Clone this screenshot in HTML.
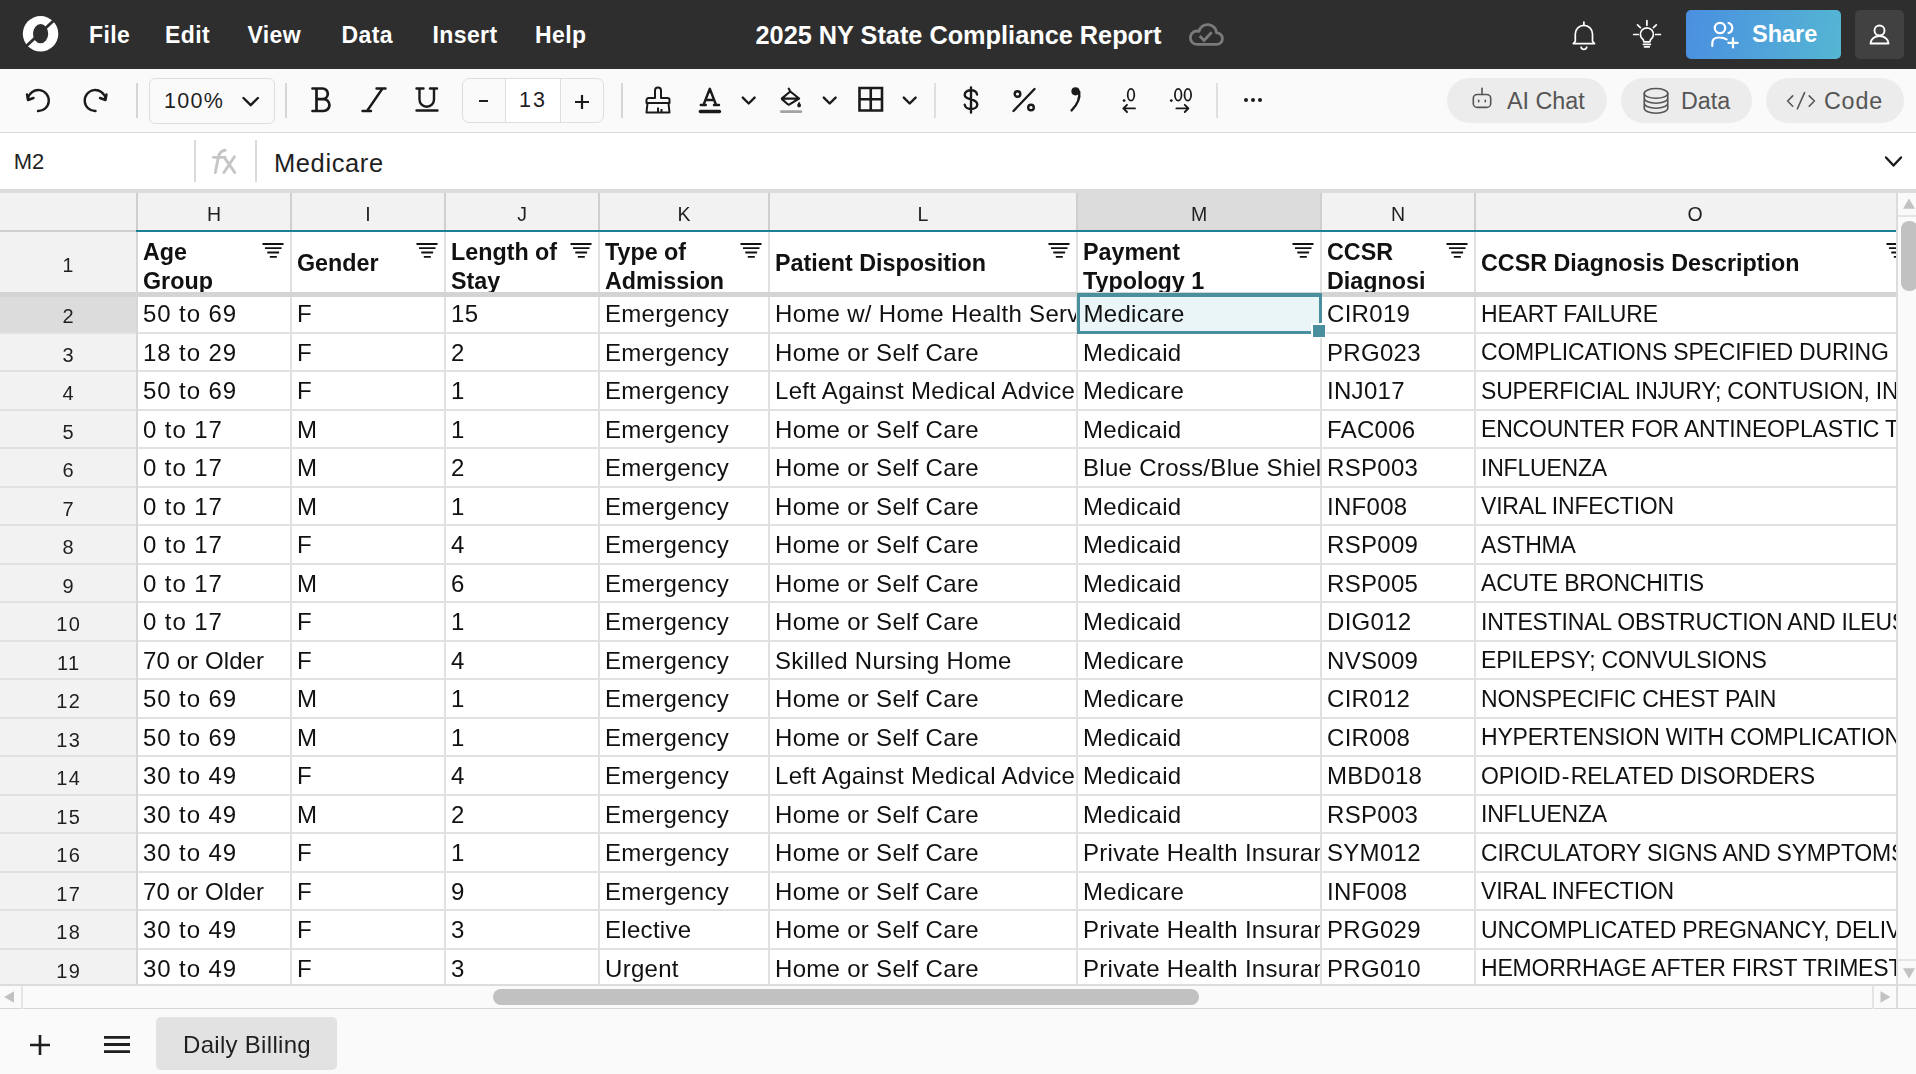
<!DOCTYPE html><html><head><meta charset="utf-8"><title>Spreadsheet</title><style>
*{margin:0;padding:0;box-sizing:border-box}
html,body{width:1916px;height:1074px;overflow:hidden;background:#fff;font-family:"Liberation Sans",sans-serif;color:#1f1f1f}
.a{position:absolute}
.t{position:absolute;white-space:nowrap;line-height:1}
svg{position:absolute;overflow:visible}
</style></head><body><div class="a" style="left:0;top:0;width:1916px;height:69px;background:#2e2e2e"></div><svg style="left:0;top:0" width="80" height="69" viewBox="0 0 80 69"><circle cx="40.55" cy="33.8" r="17.75" fill="#fff"/><ellipse cx="40.6" cy="33.7" rx="7.6" ry="9.6" fill="#2e2e2e"/><line x1="25.3" y1="47" x2="54.8" y2="19.5" stroke="#2e2e2e" stroke-width="2.9"/></svg><div class="t" style="left:89px;top:23.5px;font-size:23px;font-weight:700;letter-spacing:0.4px;color:#fff">File</div><div class="t" style="left:165px;top:23.5px;font-size:23px;font-weight:700;letter-spacing:0.4px;color:#fff">Edit</div><div class="t" style="left:247.5px;top:23.5px;font-size:23px;font-weight:700;letter-spacing:0.4px;color:#fff">View</div><div class="t" style="left:341.5px;top:23.5px;font-size:23px;font-weight:700;letter-spacing:0.4px;color:#fff">Data</div><div class="t" style="left:432.5px;top:23.5px;font-size:23px;font-weight:700;letter-spacing:0.4px;color:#fff">Insert</div><div class="t" style="left:535px;top:23.5px;font-size:23px;font-weight:700;letter-spacing:0.4px;color:#fff">Help</div><div class="t" style="left:755.5px;top:23px;font-size:25.3px;font-weight:700;color:#fff">2025 NY State Compliance Report</div><svg style="left:1180px;top:15px" width="55" height="37" viewBox="0 0 55 37"><path d="M17 29.4 H36.6 A5.8 5.8 0 0 0 36.66 17.79 A9 9 0 0 0 18.98 16.29 A6.7 6.7 0 1 0 17 29.4 Z" fill="none" stroke="#7a7a7a" stroke-width="2.8" stroke-linejoin="round"/><path d="M19.7 21 L24.1 25.5 L31.7 17.2" fill="none" stroke="#7a7a7a" stroke-width="2.8"/></svg><svg style="left:1571px;top:20px" width="26" height="31" viewBox="0 0 26 31"><path d="M2.3 23.6 L4.3 21.2 V13.9 A8.6 8.6 0 0 1 21.5 13.9 V21.2 L23.5 23.6 Z M12.9 2.1 V5.3 M10.1 27.2 A2.9 2.9 0 0 0 15.7 27.2" fill="none" stroke="#fff" stroke-width="1.7" stroke-linecap="round" stroke-linejoin="round"/></svg><svg style="left:1632px;top:19px" width="30" height="30" viewBox="0 0 30 30"><path d="M14.9 1.6 V6.2 M5.5 5.8 L8.4 8.7 M24.3 5.8 L21.4 8.7 M1.7 15.5 H6.2 M23.6 15.5 H28.4 M11.9 22.8 L11.3 20.7 A6.5 6.5 0 1 1 18.5 20.7 L17.9 22.8 Z M11.4 25.3 H18.4 M12.5 27.8 H17.3" fill="none" stroke="#fff" stroke-width="1.7" stroke-linecap="round" stroke-linejoin="round"/></svg><div class="a" style="left:1686px;top:10px;width:155px;height:49px;border-radius:5px;background:linear-gradient(100deg,#4a8fe0 0%,#55b6d3 100%)"></div><svg style="left:1709px;top:20px" width="32" height="30" viewBox="0 0 32 30"><circle cx="11" cy="8" r="5.2" fill="none" stroke="#fff" stroke-width="2.2"/><path d="M19.5 3 a5.2 5.2 0 0 1 0 10" fill="none" stroke="#fff" stroke-width="2.2" stroke-linecap="round"/><path d="M3.3 25.9 V23 Q3.3 17.5 10 17.5 Q15 17.5 17.6 19.3" fill="none" stroke="#fff" stroke-width="2.2" stroke-linecap="round"/><path d="M24 18.3 V27.5 M19.3 22.8 H28.7" fill="none" stroke="#fff" stroke-width="2.2" stroke-linecap="round"/></svg><div class="t" style="left:1752px;top:22.5px;font-size:23.5px;font-weight:700;color:#fff">Share</div><div class="a" style="left:1855px;top:10px;width:49px;height:49px;border-radius:5px;background:#414141"></div><svg style="left:1869px;top:24px" width="22" height="22" viewBox="0 0 22 22"><circle cx="10.5" cy="6.5" r="5" fill="none" stroke="#fff" stroke-width="1.9"/><path d="M1.5 19.5 a9 7.5 0 0 1 18 0 z" fill="none" stroke="#fff" stroke-width="1.9" stroke-linejoin="round"/></svg><div class="a" style="left:0;top:69px;width:1916px;height:63px;background:#fafafa"></div><div class="a" style="left:0;top:132px;width:1916px;height:1px;background:#dcdcdc"></div><svg style="left:24px;top:86px" width="30" height="28" viewBox="0 0 30 28"><path d="M14 25 a10.5 10.5 0 1 0 -10-12.5" fill="none" stroke="#1a1a1a" stroke-width="2.4" stroke-linecap="round" stroke-linejoin="round"/><path d="M3 8.5 l1 5.5 l5.5 -2" fill="none" stroke="#1a1a1a" stroke-width="2.4" stroke-linecap="round" stroke-linejoin="round"/></svg><svg style="left:80px;top:86px" width="30" height="28" viewBox="0 0 30 28"><path d="M15.5 25 a10.5 10.5 0 1 1 10-12.5" fill="none" stroke="#1a1a1a" stroke-width="2.4" stroke-linecap="round" stroke-linejoin="round"/><path d="M26.5 8.5 l-1 5.5 l-5.5 -2" fill="none" stroke="#1a1a1a" stroke-width="2.4" stroke-linecap="round" stroke-linejoin="round"/></svg><div class="a" style="left:136px;top:83px;width:2px;height:35px;background:#d6d6d6"></div><div class="a" style="left:149px;top:78px;width:126px;height:46px;border:1.5px solid #dedede;border-radius:6px;background:#fafafa"></div><div class="t" style="left:164px;top:90.5px;font-size:21.5px;letter-spacing:1.3px;color:#1f1f1f">100%</div><svg style="left:240px;top:94px" width="20" height="14" viewBox="0 0 20 14"><path d="M3.5 4 l7.2 7.2 l7.2 -7.2" fill="none" stroke="#1a1a1a" stroke-width="2.4" stroke-linecap="round" stroke-linejoin="round" stroke-width="2.7"/></svg><div class="a" style="left:285px;top:83px;width:2px;height:35px;background:#d6d6d6"></div><svg style="left:310px;top:86px" width="24" height="28" viewBox="0 0 24 28"><path d="M2.5 2.5 h10 a5.3 5.3 0 0 1 0 10.6 h-6 M6.5 2.5 v22.5 M6.5 13.1 h7 a5.9 5.9 0 0 1 0 11.9 h-11" fill="none" stroke="#1a1a1a" stroke-width="2.7" stroke-linecap="round" stroke-linejoin="round"/></svg><svg style="left:360px;top:86px" width="28" height="28" viewBox="0 0 28 28"><path d="M16.5 2.5 h9 M2.5 25 h8.5 M22.5 2.5 l-15.5 22.5" fill="none" stroke="#1a1a1a" stroke-width="2.4" stroke-linecap="round" stroke-linejoin="round"/></svg><svg style="left:414px;top:86px" width="26" height="28" viewBox="0 0 26 28"><path d="M2.5 2.5 h7 M16 2.5 h7 M5.5 2.5 v11 a7.25 7.25 0 0 0 14.5 0 v-11 M2.5 24.5 h21" fill="none" stroke="#1a1a1a" stroke-width="2.4" stroke-linecap="round" stroke-linejoin="round"/></svg><div class="a" style="left:462px;top:78px;width:142px;height:45px;border:1.5px solid #dedede;border-radius:7px;background:#fafafa;overflow:hidden"><div class="a" style="left:42px;top:0;width:56px;height:43px;background:#fff;border-left:1.5px solid #dedede;border-right:1.5px solid #dedede"></div></div><div class="a" style="left:479px;top:100px;width:9px;height:2.2px;background:#1f1f1f"></div><div class="t" style="left:519px;top:89.5px;font-size:21.5px;letter-spacing:2px;color:#1f1f1f">13</div><svg style="left:573px;top:93px" width="18" height="18" viewBox="0 0 18 18"><path d="M9 2 v14 M2 9 h14" fill="none" stroke="#1a1a1a" stroke-width="2.2"/></svg><div class="a" style="left:621px;top:83px;width:2px;height:35px;background:#d6d6d6"></div><svg style="left:644px;top:85px" width="28" height="30" viewBox="0 0 28 30"><path d="M11 13 V5.5 a3 3 0 0 1 6 0 V13 h6.5 a2 2 0 0 1 2 2 v3 H2.5 v-3 a2 2 0 0 1 2-2z M3.5 18 l-1 9.5 h23 l-1-9.5 M14 22.5 v5 M17.5 24 v3.5" fill="none" stroke="#1a1a1a" stroke-width="2" stroke-linejoin="round"/></svg><svg style="left:697px;top:86px" width="28" height="30" viewBox="0 0 28 30"><path d="M6.5 19 L12.8 2.8 L19.1 19 M8.6 14 H17 M3.8 19 H8.8 M17 19 H22" fill="none" stroke="#1a1a1a" stroke-width="2.4" stroke-linecap="round" stroke-linejoin="round" stroke-width="2.2"/><path d="M3.3 25.5 H22.5" stroke="#1a1a1a" stroke-width="3.3" stroke-linecap="round"/></svg><svg style="left:739px;top:94px" width="20" height="14" viewBox="0 0 20 14"><path d="M3.8 3.6 l5.9 5.9 l5.9 -5.9" fill="none" stroke="#1a1a1a" stroke-width="2.4" stroke-linecap="round" stroke-linejoin="round" stroke-width="2.6"/></svg><svg style="left:820px;top:94px" width="20" height="14" viewBox="0 0 20 14"><path d="M3.8 3.6 l5.9 5.9 l5.9 -5.9" fill="none" stroke="#1a1a1a" stroke-width="2.4" stroke-linecap="round" stroke-linejoin="round" stroke-width="2.6"/></svg><svg style="left:900px;top:94px" width="20" height="14" viewBox="0 0 20 14"><path d="M3.8 3.6 l5.9 5.9 l5.9 -5.9" fill="none" stroke="#1a1a1a" stroke-width="2.4" stroke-linecap="round" stroke-linejoin="round" stroke-width="2.6"/></svg><svg style="left:778px;top:86px" width="28" height="30" viewBox="0 0 28 30"><path d="M10.7 2.6 L12.3 5.5 L21.1 12.5 L11.6 18.3 Q10.6 18.9 9.8 18.2 L4.2 13.4 Q3.5 12.8 4.2 12.1 L12.3 5.5 M3.9 12.6 H21.1" fill="none" stroke="#1a1a1a" stroke-width="2.1" stroke-linejoin="round" stroke-linecap="round"/><path d="M21.1 15.4 L22.8 18.6 a1.9 1.9 0 1 1 -3.4 0z" fill="#1a1a1a"/><path d="M3.4 25.7 h19.5" stroke="#a3a3a3" stroke-width="2.8" stroke-linecap="round"/></svg><svg style="left:856px;top:85px" width="30" height="30" viewBox="0 0 30 30"><path d="M3.5 3 h22.5 v22.5 h-22.5z M14.75 3 v22.5 M3.5 14.25 h22.5" fill="none" stroke="#1a1a1a" stroke-width="2.6"/></svg><div class="a" style="left:934px;top:83px;width:2px;height:35px;background:#dfdfdf"></div><svg style="left:960px;top:85px" width="22" height="30" viewBox="0 0 22 30"><path d="M17 9.5 a5.5 4.6 0 0 0 -6-4.2 c-3.5 0-6.3 1.8-6.3 4.4 c0 6.3 12.6 3.2 12.6 9.7 c0 2.8-2.8 4.6-6.3 4.6 a6 4.8 0 0 1 -6.3-4.3 M11 2.5 v25" fill="none" stroke="#1a1a1a" stroke-width="2.4" stroke-linecap="round" stroke-linejoin="round" stroke-width="2.4"/></svg><svg style="left:1010px;top:86px" width="30" height="28" viewBox="0 0 30 28"><path d="M24.5 3 l-21 22" fill="none" stroke="#1a1a1a" stroke-width="2.4" stroke-linecap="round" stroke-linejoin="round"/><circle cx="7.5" cy="8" r="2.8" fill="none" stroke="#1a1a1a" stroke-width="2.4" stroke-linecap="round" stroke-linejoin="round" stroke-width="2.1"/><circle cx="21" cy="21.5" r="2.8" fill="none" stroke="#1a1a1a" stroke-width="2.4" stroke-linecap="round" stroke-linejoin="round" stroke-width="2.1"/></svg><svg style="left:1068px;top:85px" width="16" height="28" viewBox="0 0 16 28"><circle cx="7.5" cy="6.3" r="4.1" fill="#1a1a1a"/><path d="M11.2 6.8 C12.2 13.5 9.5 19.5 3.6 25.4" fill="none" stroke="#1a1a1a" stroke-width="2.4" stroke-linecap="round" stroke-linejoin="round" stroke-width="2.5"/></svg><svg style="left:1115px;top:82px" width="85" height="36" viewBox="0 0 85 36"><circle cx="9.1" cy="18.6" r="1.35" fill="#1a1a1a"/><circle cx="56.3" cy="18.6" r="1.35" fill="#1a1a1a"/><g fill="none" stroke="#1a1a1a" stroke-width="1.8"><ellipse cx="16" cy="12.75" rx="3.3" ry="5.9"/><ellipse cx="63.2" cy="12.75" rx="3.3" ry="5.9"/><ellipse cx="72.8" cy="12.75" rx="3.3" ry="5.9"/></g><path d="M20 26.4 H8.4 M12 22.8 L8.4 26.4 L12 30 M61.4 26.4 H73.4 M69.8 22.8 L73.4 26.4 L69.8 30" fill="none" stroke="#1a1a1a" stroke-width="1.9" stroke-linecap="round" stroke-linejoin="round"/></svg><div class="a" style="left:1216px;top:83px;width:2px;height:35px;background:#dfdfdf"></div><div class="a" style="left:1244px;top:98px;width:4px;height:4px;border-radius:50%;background:#1a1a1a"></div><div class="a" style="left:1251px;top:98px;width:4px;height:4px;border-radius:50%;background:#1a1a1a"></div><div class="a" style="left:1258px;top:98px;width:4px;height:4px;border-radius:50%;background:#1a1a1a"></div><div class="a" style="left:1447px;top:78px;width:160px;height:45px;border-radius:23px;background:#ececec"></div><div class="a" style="left:1621px;top:78px;width:131px;height:45px;border-radius:23px;background:#ececec"></div><div class="a" style="left:1766px;top:78px;width:138px;height:45px;border-radius:23px;background:#ececec"></div><svg style="left:1470px;top:86px" width="24" height="24" viewBox="0 0 24 24"><rect x="3.3" y="8.5" width="17.4" height="12.9" rx="4" fill="none" stroke="#555" stroke-width="1.6" stroke-linecap="round" stroke-linejoin="round"/><path d="M12 2.2 V8.5" fill="none" stroke="#555" stroke-width="1.6" stroke-linecap="round" stroke-linejoin="round"/><path d="M8.7 14.2 V15.8 M15.3 14.2 V15.8" fill="none" stroke="#555" stroke-width="1.6" stroke-linecap="round" stroke-linejoin="round" stroke-width="2"/></svg><div class="t" style="left:1507px;top:90px;font-size:23.3px;color:#555">AI Chat</div><svg style="left:1642px;top:86px" width="28" height="30" viewBox="0 0 28 30"><ellipse cx="14" cy="7.4" rx="11.75" ry="4.9" fill="none" stroke="#555" stroke-width="1.6" stroke-linecap="round" stroke-linejoin="round" stroke-width="1.5"/><path d="M2.25 7.4 V22.3 A11.75 4.9 0 0 0 25.75 22.3 V7.4 M2.25 12.37 A11.75 4.9 0 0 0 25.75 12.37 M2.25 17.33 A11.75 4.9 0 0 0 25.75 17.33" fill="none" stroke="#555" stroke-width="1.6" stroke-linecap="round" stroke-linejoin="round" stroke-width="1.5"/></svg><div class="t" style="left:1681px;top:90px;font-size:23.3px;color:#555">Data</div><svg style="left:1786px;top:89px" width="32" height="24" viewBox="0 0 32 24"><path d="M6.7 6.9 L1.6 12.05 L6.7 17.2 M18.6 3.6 L11.4 19.8 M23.2 6.9 L28.4 12.05 L23.2 17.2" fill="none" stroke="#555" stroke-width="1.6" stroke-linecap="round" stroke-linejoin="round" stroke-width="2.2"/></svg><div class="t" style="left:1824px;top:90px;font-size:23.3px;letter-spacing:0.8px;color:#555">Code</div><div class="a" style="left:0;top:133px;width:1916px;height:56px;background:#fff"></div><div class="t" style="left:13.8px;top:151px;font-size:22px;color:#1f1f1f">M2</div><div class="a" style="left:194px;top:140px;width:2px;height:42px;background:#dadada"></div><svg style="left:195px;top:140px" width="60" height="45" viewBox="0 0 60 45"><path d="M20.3 32.5 L23.3 17.6 Q24.7 10.6 30.2 10.3 M18.4 17.4 H30.2 M29.3 17.4 L39.8 32.5 M39.4 16.8 L28.9 32.5" fill="none" stroke="#c6c6c6" stroke-width="2.9" stroke-linecap="round"/></svg><div class="a" style="left:255px;top:140px;width:2px;height:42px;background:#dadada"></div><div class="t" style="left:274px;top:150.5px;font-size:25.5px;letter-spacing:0.6px;color:#1f1f1f">Medicare</div><svg style="left:1882px;top:152px" width="22" height="16" viewBox="0 0 22 16"><path d="M4 5.5 l7.5 8 l7.5 -8" fill="none" stroke="#1a1a1a" stroke-width="2.4" stroke-linecap="round" stroke-linejoin="round"/></svg><div class="a" style="left:0;top:0;width:1916px;height:1074px;will-change:transform"><div class="a" style="left:0;top:189px;width:1916px;height:4px;background:#dcdcdc"></div><div class="a" style="left:0;top:193px;width:1916px;height:37px;background:#f2f2f2"></div><div class="a" style="left:1077px;top:193px;width:244px;height:37px;background:#dcdcdc"></div><div class="t" style="left:137px;top:205px;width:154px;text-align:center;font-size:19.5px;color:#1f1f1f">H</div><div class="t" style="left:291px;top:205px;width:154px;text-align:center;font-size:19.5px;color:#1f1f1f">I</div><div class="t" style="left:445px;top:205px;width:154px;text-align:center;font-size:19.5px;color:#1f1f1f">J</div><div class="t" style="left:599px;top:205px;width:170px;text-align:center;font-size:19.5px;color:#1f1f1f">K</div><div class="t" style="left:769px;top:205px;width:308px;text-align:center;font-size:19.5px;color:#1f1f1f">L</div><div class="t" style="left:1077px;top:205px;width:244px;text-align:center;font-size:19.5px;color:#1f1f1f">M</div><div class="t" style="left:1321px;top:205px;width:154px;text-align:center;font-size:19.5px;color:#1f1f1f">N</div><div class="t" style="left:1475px;top:205px;width:440px;text-align:center;font-size:19.5px;color:#1f1f1f">O</div><div class="a" style="left:0;top:230px;width:137px;height:2px;background:#cfcfcf"></div><div class="a" style="left:136px;top:230px;width:1760px;height:2px;background:#1f8095"></div><div class="a" style="left:0;top:232px;width:137px;height:60px;background:#f2f2f2"></div><div class="t" style="left:0;top:256px;width:136px;text-align:center;font-size:19.5px;color:#1f1f1f">1</div><div class="a" style="left:138px;top:232px;width:152px;height:60px;overflow:hidden"><div class="t" style="left:5px;top:9px;font-size:23.3px;font-weight:700;color:#111">Age</div><div class="t" style="left:5px;top:38px;font-size:23.3px;font-weight:700;color:#111">Group</div></div><svg style="left:261px;top:242px" width="24" height="18" viewBox="0 0 24 18"><path d="M1.5 2 h21 M4 6.2 h16.5 M6.3 10.5 h11.8 M8.8 14.8 h7" stroke="#111" stroke-width="1.8" fill="none"/></svg><div class="a" style="left:292px;top:232px;width:152px;height:60px;overflow:hidden"><div class="t" style="left:5px;top:20px;font-size:23.3px;font-weight:700;color:#111">Gender</div></div><svg style="left:415px;top:242px" width="24" height="18" viewBox="0 0 24 18"><path d="M1.5 2 h21 M4 6.2 h16.5 M6.3 10.5 h11.8 M8.8 14.8 h7" stroke="#111" stroke-width="1.8" fill="none"/></svg><div class="a" style="left:446px;top:232px;width:152px;height:60px;overflow:hidden"><div class="t" style="left:5px;top:9px;font-size:23.3px;font-weight:700;color:#111">Length of</div><div class="t" style="left:5px;top:38px;font-size:23.3px;font-weight:700;color:#111">Stay</div></div><svg style="left:569px;top:242px" width="24" height="18" viewBox="0 0 24 18"><path d="M1.5 2 h21 M4 6.2 h16.5 M6.3 10.5 h11.8 M8.8 14.8 h7" stroke="#111" stroke-width="1.8" fill="none"/></svg><div class="a" style="left:600px;top:232px;width:168px;height:60px;overflow:hidden"><div class="t" style="left:5px;top:9px;font-size:23.3px;font-weight:700;color:#111">Type of</div><div class="t" style="left:5px;top:38px;font-size:23.3px;font-weight:700;color:#111">Admission</div></div><svg style="left:739px;top:242px" width="24" height="18" viewBox="0 0 24 18"><path d="M1.5 2 h21 M4 6.2 h16.5 M6.3 10.5 h11.8 M8.8 14.8 h7" stroke="#111" stroke-width="1.8" fill="none"/></svg><div class="a" style="left:770px;top:232px;width:306px;height:60px;overflow:hidden"><div class="t" style="left:5px;top:20px;font-size:23.3px;font-weight:700;color:#111">Patient Disposition</div></div><svg style="left:1047px;top:242px" width="24" height="18" viewBox="0 0 24 18"><path d="M1.5 2 h21 M4 6.2 h16.5 M6.3 10.5 h11.8 M8.8 14.8 h7" stroke="#111" stroke-width="1.8" fill="none"/></svg><div class="a" style="left:1078px;top:232px;width:242px;height:60px;overflow:hidden"><div class="t" style="left:5px;top:9px;font-size:23.3px;font-weight:700;color:#111">Payment</div><div class="t" style="left:5px;top:38px;font-size:23.3px;font-weight:700;color:#111">Typology 1</div></div><svg style="left:1291px;top:242px" width="24" height="18" viewBox="0 0 24 18"><path d="M1.5 2 h21 M4 6.2 h16.5 M6.3 10.5 h11.8 M8.8 14.8 h7" stroke="#111" stroke-width="1.8" fill="none"/></svg><div class="a" style="left:1322px;top:232px;width:152px;height:60px;overflow:hidden"><div class="t" style="left:5px;top:9px;font-size:23.3px;font-weight:700;color:#111">CCSR</div><div class="t" style="left:5px;top:38px;font-size:23.3px;font-weight:700;color:#111">Diagnosi</div></div><svg style="left:1445px;top:242px" width="24" height="18" viewBox="0 0 24 18"><path d="M1.5 2 h21 M4 6.2 h16.5 M6.3 10.5 h11.8 M8.8 14.8 h7" stroke="#111" stroke-width="1.8" fill="none"/></svg><div class="a" style="left:1476px;top:232px;width:438px;height:60px;overflow:hidden"><div class="t" style="left:5px;top:20px;font-size:23.3px;font-weight:700;color:#111">CCSR Diagnosis Description</div></div><svg style="left:1885px;top:242px" width="24" height="18" viewBox="0 0 24 18"><path d="M1.5 2 h21 M4 6.2 h16.5 M6.3 10.5 h11.8 M8.8 14.8 h7" stroke="#111" stroke-width="1.8" fill="none"/></svg><div class="a" style="left:0;top:292px;width:1896px;height:5px;background:#d4d4d4"></div><div class="a" style="left:0;top:297px;width:137px;height:688px;background:#f2f2f2"></div><div class="a" style="left:0;top:297px;width:137px;height:36px;background:#dcdcdc"></div><div class="t" style="left:0.7px;top:306.00px;width:136px;text-align:center;font-size:20px;letter-spacing:1.4px;color:#1f1f1f">2</div><div class="a" style="left:138px;top:297px;width:152px;height:35px;overflow:hidden"><div class="t" style="left:5px;top:5.10px;font-size:24px;letter-spacing:0.9px;color:#111">50 to 69</div></div><div class="a" style="left:292px;top:297px;width:152px;height:35px;overflow:hidden"><div class="t" style="left:5px;top:5.10px;font-size:24px;letter-spacing:0.3px;color:#111">F</div></div><div class="a" style="left:446px;top:297px;width:152px;height:35px;overflow:hidden"><div class="t" style="left:5px;top:5.10px;font-size:24px;letter-spacing:0.3px;color:#111">15</div></div><div class="a" style="left:600px;top:297px;width:168px;height:35px;overflow:hidden"><div class="t" style="left:5px;top:5.10px;font-size:24px;letter-spacing:0.3px;color:#111">Emergency</div></div><div class="a" style="left:770px;top:297px;width:306px;height:35px;overflow:hidden"><div class="t" style="left:5px;top:5.10px;font-size:24px;letter-spacing:0.3px;color:#111">Home w/ Home Health Services</div></div><div class="a" style="left:1078px;top:297px;width:242px;height:35px;overflow:hidden"><div class="t" style="left:5px;top:5.10px;font-size:24px;letter-spacing:0.3px;color:#111">Medicare</div></div><div class="a" style="left:1322px;top:297px;width:152px;height:35px;overflow:hidden"><div class="t" style="left:5px;top:5.10px;font-size:24px;letter-spacing:0.3px;color:#111">CIR019</div></div><div class="a" style="left:1476px;top:297px;width:438px;height:35px;overflow:hidden"><div class="t" style="left:5px;top:5.90px;font-size:23px;letter-spacing:-0.2px;color:#111">HEART FAILURE</div></div><div class="a" style="left:0;top:332px;width:1896px;height:2px;background:#e1e1e1"></div><div class="t" style="left:0.7px;top:344.50px;width:136px;text-align:center;font-size:20px;letter-spacing:1.4px;color:#1f1f1f">3</div><div class="a" style="left:138px;top:334px;width:152px;height:36px;overflow:hidden"><div class="t" style="left:5px;top:6.60px;font-size:24px;letter-spacing:0.9px;color:#111">18 to 29</div></div><div class="a" style="left:292px;top:334px;width:152px;height:36px;overflow:hidden"><div class="t" style="left:5px;top:6.60px;font-size:24px;letter-spacing:0.3px;color:#111">F</div></div><div class="a" style="left:446px;top:334px;width:152px;height:36px;overflow:hidden"><div class="t" style="left:5px;top:6.60px;font-size:24px;letter-spacing:0.3px;color:#111">2</div></div><div class="a" style="left:600px;top:334px;width:168px;height:36px;overflow:hidden"><div class="t" style="left:5px;top:6.60px;font-size:24px;letter-spacing:0.3px;color:#111">Emergency</div></div><div class="a" style="left:770px;top:334px;width:306px;height:36px;overflow:hidden"><div class="t" style="left:5px;top:6.60px;font-size:24px;letter-spacing:0.3px;color:#111">Home or Self Care</div></div><div class="a" style="left:1078px;top:334px;width:242px;height:36px;overflow:hidden"><div class="t" style="left:5px;top:6.60px;font-size:24px;letter-spacing:0.3px;color:#111">Medicaid</div></div><div class="a" style="left:1322px;top:334px;width:152px;height:36px;overflow:hidden"><div class="t" style="left:5px;top:6.60px;font-size:24px;letter-spacing:0.3px;color:#111">PRG023</div></div><div class="a" style="left:1476px;top:334px;width:438px;height:36px;overflow:hidden"><div class="t" style="left:5px;top:7.40px;font-size:23px;letter-spacing:-0.2px;color:#111">COMPLICATIONS SPECIFIED DURING CHILDBIRTH</div></div><div class="a" style="left:0;top:370px;width:1896px;height:2px;background:#e1e1e1"></div><div class="t" style="left:0.7px;top:383.00px;width:136px;text-align:center;font-size:20px;letter-spacing:1.4px;color:#1f1f1f">4</div><div class="a" style="left:138px;top:372px;width:152px;height:37px;overflow:hidden"><div class="t" style="left:5px;top:7.10px;font-size:24px;letter-spacing:0.9px;color:#111">50 to 69</div></div><div class="a" style="left:292px;top:372px;width:152px;height:37px;overflow:hidden"><div class="t" style="left:5px;top:7.10px;font-size:24px;letter-spacing:0.3px;color:#111">F</div></div><div class="a" style="left:446px;top:372px;width:152px;height:37px;overflow:hidden"><div class="t" style="left:5px;top:7.10px;font-size:24px;letter-spacing:0.3px;color:#111">1</div></div><div class="a" style="left:600px;top:372px;width:168px;height:37px;overflow:hidden"><div class="t" style="left:5px;top:7.10px;font-size:24px;letter-spacing:0.3px;color:#111">Emergency</div></div><div class="a" style="left:770px;top:372px;width:306px;height:37px;overflow:hidden"><div class="t" style="left:5px;top:7.10px;font-size:24px;letter-spacing:0.3px;color:#111">Left Against Medical Advice</div></div><div class="a" style="left:1078px;top:372px;width:242px;height:37px;overflow:hidden"><div class="t" style="left:5px;top:7.10px;font-size:24px;letter-spacing:0.3px;color:#111">Medicare</div></div><div class="a" style="left:1322px;top:372px;width:152px;height:37px;overflow:hidden"><div class="t" style="left:5px;top:7.10px;font-size:24px;letter-spacing:0.3px;color:#111">INJ017</div></div><div class="a" style="left:1476px;top:372px;width:438px;height:37px;overflow:hidden"><div class="t" style="left:5px;top:7.90px;font-size:23px;letter-spacing:-0.2px;color:#111">SUPERFICIAL INJURY; CONTUSION, INITIAL ENCOUNTER</div></div><div class="a" style="left:0;top:409px;width:1896px;height:2px;background:#e1e1e1"></div><div class="t" style="left:0.7px;top:421.50px;width:136px;text-align:center;font-size:20px;letter-spacing:1.4px;color:#1f1f1f">5</div><div class="a" style="left:138px;top:411px;width:152px;height:36px;overflow:hidden"><div class="t" style="left:5px;top:6.60px;font-size:24px;letter-spacing:0.9px;color:#111">0 to 17</div></div><div class="a" style="left:292px;top:411px;width:152px;height:36px;overflow:hidden"><div class="t" style="left:5px;top:6.60px;font-size:24px;letter-spacing:0.3px;color:#111">M</div></div><div class="a" style="left:446px;top:411px;width:152px;height:36px;overflow:hidden"><div class="t" style="left:5px;top:6.60px;font-size:24px;letter-spacing:0.3px;color:#111">1</div></div><div class="a" style="left:600px;top:411px;width:168px;height:36px;overflow:hidden"><div class="t" style="left:5px;top:6.60px;font-size:24px;letter-spacing:0.3px;color:#111">Emergency</div></div><div class="a" style="left:770px;top:411px;width:306px;height:36px;overflow:hidden"><div class="t" style="left:5px;top:6.60px;font-size:24px;letter-spacing:0.3px;color:#111">Home or Self Care</div></div><div class="a" style="left:1078px;top:411px;width:242px;height:36px;overflow:hidden"><div class="t" style="left:5px;top:6.60px;font-size:24px;letter-spacing:0.3px;color:#111">Medicaid</div></div><div class="a" style="left:1322px;top:411px;width:152px;height:36px;overflow:hidden"><div class="t" style="left:5px;top:6.60px;font-size:24px;letter-spacing:0.3px;color:#111">FAC006</div></div><div class="a" style="left:1476px;top:411px;width:438px;height:36px;overflow:hidden"><div class="t" style="left:5px;top:7.40px;font-size:23px;letter-spacing:-0.2px;color:#111">ENCOUNTER FOR ANTINEOPLASTIC THERAPIES</div></div><div class="a" style="left:0;top:447px;width:1896px;height:2px;background:#e1e1e1"></div><div class="t" style="left:0.7px;top:460.00px;width:136px;text-align:center;font-size:20px;letter-spacing:1.4px;color:#1f1f1f">6</div><div class="a" style="left:138px;top:449px;width:152px;height:37px;overflow:hidden"><div class="t" style="left:5px;top:7.10px;font-size:24px;letter-spacing:0.9px;color:#111">0 to 17</div></div><div class="a" style="left:292px;top:449px;width:152px;height:37px;overflow:hidden"><div class="t" style="left:5px;top:7.10px;font-size:24px;letter-spacing:0.3px;color:#111">M</div></div><div class="a" style="left:446px;top:449px;width:152px;height:37px;overflow:hidden"><div class="t" style="left:5px;top:7.10px;font-size:24px;letter-spacing:0.3px;color:#111">2</div></div><div class="a" style="left:600px;top:449px;width:168px;height:37px;overflow:hidden"><div class="t" style="left:5px;top:7.10px;font-size:24px;letter-spacing:0.3px;color:#111">Emergency</div></div><div class="a" style="left:770px;top:449px;width:306px;height:37px;overflow:hidden"><div class="t" style="left:5px;top:7.10px;font-size:24px;letter-spacing:0.3px;color:#111">Home or Self Care</div></div><div class="a" style="left:1078px;top:449px;width:242px;height:37px;overflow:hidden"><div class="t" style="left:5px;top:7.10px;font-size:24px;letter-spacing:0.3px;color:#111">Blue Cross/Blue Shield</div></div><div class="a" style="left:1322px;top:449px;width:152px;height:37px;overflow:hidden"><div class="t" style="left:5px;top:7.10px;font-size:24px;letter-spacing:0.3px;color:#111">RSP003</div></div><div class="a" style="left:1476px;top:449px;width:438px;height:37px;overflow:hidden"><div class="t" style="left:5px;top:7.90px;font-size:23px;letter-spacing:-0.2px;color:#111">INFLUENZA</div></div><div class="a" style="left:0;top:486px;width:1896px;height:2px;background:#e1e1e1"></div><div class="t" style="left:0.7px;top:498.50px;width:136px;text-align:center;font-size:20px;letter-spacing:1.4px;color:#1f1f1f">7</div><div class="a" style="left:138px;top:488px;width:152px;height:36px;overflow:hidden"><div class="t" style="left:5px;top:6.60px;font-size:24px;letter-spacing:0.9px;color:#111">0 to 17</div></div><div class="a" style="left:292px;top:488px;width:152px;height:36px;overflow:hidden"><div class="t" style="left:5px;top:6.60px;font-size:24px;letter-spacing:0.3px;color:#111">M</div></div><div class="a" style="left:446px;top:488px;width:152px;height:36px;overflow:hidden"><div class="t" style="left:5px;top:6.60px;font-size:24px;letter-spacing:0.3px;color:#111">1</div></div><div class="a" style="left:600px;top:488px;width:168px;height:36px;overflow:hidden"><div class="t" style="left:5px;top:6.60px;font-size:24px;letter-spacing:0.3px;color:#111">Emergency</div></div><div class="a" style="left:770px;top:488px;width:306px;height:36px;overflow:hidden"><div class="t" style="left:5px;top:6.60px;font-size:24px;letter-spacing:0.3px;color:#111">Home or Self Care</div></div><div class="a" style="left:1078px;top:488px;width:242px;height:36px;overflow:hidden"><div class="t" style="left:5px;top:6.60px;font-size:24px;letter-spacing:0.3px;color:#111">Medicaid</div></div><div class="a" style="left:1322px;top:488px;width:152px;height:36px;overflow:hidden"><div class="t" style="left:5px;top:6.60px;font-size:24px;letter-spacing:0.3px;color:#111">INF008</div></div><div class="a" style="left:1476px;top:488px;width:438px;height:36px;overflow:hidden"><div class="t" style="left:5px;top:7.40px;font-size:23px;letter-spacing:-0.2px;color:#111">VIRAL INFECTION</div></div><div class="a" style="left:0;top:524px;width:1896px;height:2px;background:#e1e1e1"></div><div class="t" style="left:0.7px;top:537.00px;width:136px;text-align:center;font-size:20px;letter-spacing:1.4px;color:#1f1f1f">8</div><div class="a" style="left:138px;top:526px;width:152px;height:37px;overflow:hidden"><div class="t" style="left:5px;top:7.10px;font-size:24px;letter-spacing:0.9px;color:#111">0 to 17</div></div><div class="a" style="left:292px;top:526px;width:152px;height:37px;overflow:hidden"><div class="t" style="left:5px;top:7.10px;font-size:24px;letter-spacing:0.3px;color:#111">F</div></div><div class="a" style="left:446px;top:526px;width:152px;height:37px;overflow:hidden"><div class="t" style="left:5px;top:7.10px;font-size:24px;letter-spacing:0.3px;color:#111">4</div></div><div class="a" style="left:600px;top:526px;width:168px;height:37px;overflow:hidden"><div class="t" style="left:5px;top:7.10px;font-size:24px;letter-spacing:0.3px;color:#111">Emergency</div></div><div class="a" style="left:770px;top:526px;width:306px;height:37px;overflow:hidden"><div class="t" style="left:5px;top:7.10px;font-size:24px;letter-spacing:0.3px;color:#111">Home or Self Care</div></div><div class="a" style="left:1078px;top:526px;width:242px;height:37px;overflow:hidden"><div class="t" style="left:5px;top:7.10px;font-size:24px;letter-spacing:0.3px;color:#111">Medicaid</div></div><div class="a" style="left:1322px;top:526px;width:152px;height:37px;overflow:hidden"><div class="t" style="left:5px;top:7.10px;font-size:24px;letter-spacing:0.3px;color:#111">RSP009</div></div><div class="a" style="left:1476px;top:526px;width:438px;height:37px;overflow:hidden"><div class="t" style="left:5px;top:7.90px;font-size:23px;letter-spacing:-0.2px;color:#111">ASTHMA</div></div><div class="a" style="left:0;top:563px;width:1896px;height:2px;background:#e1e1e1"></div><div class="t" style="left:0.7px;top:575.50px;width:136px;text-align:center;font-size:20px;letter-spacing:1.4px;color:#1f1f1f">9</div><div class="a" style="left:138px;top:565px;width:152px;height:36px;overflow:hidden"><div class="t" style="left:5px;top:6.60px;font-size:24px;letter-spacing:0.9px;color:#111">0 to 17</div></div><div class="a" style="left:292px;top:565px;width:152px;height:36px;overflow:hidden"><div class="t" style="left:5px;top:6.60px;font-size:24px;letter-spacing:0.3px;color:#111">M</div></div><div class="a" style="left:446px;top:565px;width:152px;height:36px;overflow:hidden"><div class="t" style="left:5px;top:6.60px;font-size:24px;letter-spacing:0.3px;color:#111">6</div></div><div class="a" style="left:600px;top:565px;width:168px;height:36px;overflow:hidden"><div class="t" style="left:5px;top:6.60px;font-size:24px;letter-spacing:0.3px;color:#111">Emergency</div></div><div class="a" style="left:770px;top:565px;width:306px;height:36px;overflow:hidden"><div class="t" style="left:5px;top:6.60px;font-size:24px;letter-spacing:0.3px;color:#111">Home or Self Care</div></div><div class="a" style="left:1078px;top:565px;width:242px;height:36px;overflow:hidden"><div class="t" style="left:5px;top:6.60px;font-size:24px;letter-spacing:0.3px;color:#111">Medicaid</div></div><div class="a" style="left:1322px;top:565px;width:152px;height:36px;overflow:hidden"><div class="t" style="left:5px;top:6.60px;font-size:24px;letter-spacing:0.3px;color:#111">RSP005</div></div><div class="a" style="left:1476px;top:565px;width:438px;height:36px;overflow:hidden"><div class="t" style="left:5px;top:7.40px;font-size:23px;letter-spacing:-0.2px;color:#111">ACUTE BRONCHITIS</div></div><div class="a" style="left:0;top:601px;width:1896px;height:2px;background:#e1e1e1"></div><div class="t" style="left:0.7px;top:614.00px;width:136px;text-align:center;font-size:20px;letter-spacing:1.4px;color:#1f1f1f">10</div><div class="a" style="left:138px;top:603px;width:152px;height:37px;overflow:hidden"><div class="t" style="left:5px;top:7.10px;font-size:24px;letter-spacing:0.9px;color:#111">0 to 17</div></div><div class="a" style="left:292px;top:603px;width:152px;height:37px;overflow:hidden"><div class="t" style="left:5px;top:7.10px;font-size:24px;letter-spacing:0.3px;color:#111">F</div></div><div class="a" style="left:446px;top:603px;width:152px;height:37px;overflow:hidden"><div class="t" style="left:5px;top:7.10px;font-size:24px;letter-spacing:0.3px;color:#111">1</div></div><div class="a" style="left:600px;top:603px;width:168px;height:37px;overflow:hidden"><div class="t" style="left:5px;top:7.10px;font-size:24px;letter-spacing:0.3px;color:#111">Emergency</div></div><div class="a" style="left:770px;top:603px;width:306px;height:37px;overflow:hidden"><div class="t" style="left:5px;top:7.10px;font-size:24px;letter-spacing:0.3px;color:#111">Home or Self Care</div></div><div class="a" style="left:1078px;top:603px;width:242px;height:37px;overflow:hidden"><div class="t" style="left:5px;top:7.10px;font-size:24px;letter-spacing:0.3px;color:#111">Medicaid</div></div><div class="a" style="left:1322px;top:603px;width:152px;height:37px;overflow:hidden"><div class="t" style="left:5px;top:7.10px;font-size:24px;letter-spacing:0.3px;color:#111">DIG012</div></div><div class="a" style="left:1476px;top:603px;width:438px;height:37px;overflow:hidden"><div class="t" style="left:5px;top:7.90px;font-size:23px;letter-spacing:-0.2px;color:#111">INTESTINAL OBSTRUCTION AND ILEUS</div></div><div class="a" style="left:0;top:640px;width:1896px;height:2px;background:#e1e1e1"></div><div class="t" style="left:0.7px;top:652.50px;width:136px;text-align:center;font-size:20px;letter-spacing:1.4px;color:#1f1f1f">11</div><div class="a" style="left:138px;top:642px;width:152px;height:36px;overflow:hidden"><div class="t" style="left:5px;top:6.60px;font-size:24px;letter-spacing:0.1px;color:#111">70 or Older</div></div><div class="a" style="left:292px;top:642px;width:152px;height:36px;overflow:hidden"><div class="t" style="left:5px;top:6.60px;font-size:24px;letter-spacing:0.3px;color:#111">F</div></div><div class="a" style="left:446px;top:642px;width:152px;height:36px;overflow:hidden"><div class="t" style="left:5px;top:6.60px;font-size:24px;letter-spacing:0.3px;color:#111">4</div></div><div class="a" style="left:600px;top:642px;width:168px;height:36px;overflow:hidden"><div class="t" style="left:5px;top:6.60px;font-size:24px;letter-spacing:0.3px;color:#111">Emergency</div></div><div class="a" style="left:770px;top:642px;width:306px;height:36px;overflow:hidden"><div class="t" style="left:5px;top:6.60px;font-size:24px;letter-spacing:0.3px;color:#111">Skilled Nursing Home</div></div><div class="a" style="left:1078px;top:642px;width:242px;height:36px;overflow:hidden"><div class="t" style="left:5px;top:6.60px;font-size:24px;letter-spacing:0.3px;color:#111">Medicare</div></div><div class="a" style="left:1322px;top:642px;width:152px;height:36px;overflow:hidden"><div class="t" style="left:5px;top:6.60px;font-size:24px;letter-spacing:0.3px;color:#111">NVS009</div></div><div class="a" style="left:1476px;top:642px;width:438px;height:36px;overflow:hidden"><div class="t" style="left:5px;top:7.40px;font-size:23px;letter-spacing:-0.2px;color:#111">EPILEPSY; CONVULSIONS</div></div><div class="a" style="left:0;top:678px;width:1896px;height:2px;background:#e1e1e1"></div><div class="t" style="left:0.7px;top:691.00px;width:136px;text-align:center;font-size:20px;letter-spacing:1.4px;color:#1f1f1f">12</div><div class="a" style="left:138px;top:680px;width:152px;height:37px;overflow:hidden"><div class="t" style="left:5px;top:7.10px;font-size:24px;letter-spacing:0.9px;color:#111">50 to 69</div></div><div class="a" style="left:292px;top:680px;width:152px;height:37px;overflow:hidden"><div class="t" style="left:5px;top:7.10px;font-size:24px;letter-spacing:0.3px;color:#111">M</div></div><div class="a" style="left:446px;top:680px;width:152px;height:37px;overflow:hidden"><div class="t" style="left:5px;top:7.10px;font-size:24px;letter-spacing:0.3px;color:#111">1</div></div><div class="a" style="left:600px;top:680px;width:168px;height:37px;overflow:hidden"><div class="t" style="left:5px;top:7.10px;font-size:24px;letter-spacing:0.3px;color:#111">Emergency</div></div><div class="a" style="left:770px;top:680px;width:306px;height:37px;overflow:hidden"><div class="t" style="left:5px;top:7.10px;font-size:24px;letter-spacing:0.3px;color:#111">Home or Self Care</div></div><div class="a" style="left:1078px;top:680px;width:242px;height:37px;overflow:hidden"><div class="t" style="left:5px;top:7.10px;font-size:24px;letter-spacing:0.3px;color:#111">Medicare</div></div><div class="a" style="left:1322px;top:680px;width:152px;height:37px;overflow:hidden"><div class="t" style="left:5px;top:7.10px;font-size:24px;letter-spacing:0.3px;color:#111">CIR012</div></div><div class="a" style="left:1476px;top:680px;width:438px;height:37px;overflow:hidden"><div class="t" style="left:5px;top:7.90px;font-size:23px;letter-spacing:-0.2px;color:#111">NONSPECIFIC CHEST PAIN</div></div><div class="a" style="left:0;top:717px;width:1896px;height:2px;background:#e1e1e1"></div><div class="t" style="left:0.7px;top:729.50px;width:136px;text-align:center;font-size:20px;letter-spacing:1.4px;color:#1f1f1f">13</div><div class="a" style="left:138px;top:719px;width:152px;height:36px;overflow:hidden"><div class="t" style="left:5px;top:6.60px;font-size:24px;letter-spacing:0.9px;color:#111">50 to 69</div></div><div class="a" style="left:292px;top:719px;width:152px;height:36px;overflow:hidden"><div class="t" style="left:5px;top:6.60px;font-size:24px;letter-spacing:0.3px;color:#111">M</div></div><div class="a" style="left:446px;top:719px;width:152px;height:36px;overflow:hidden"><div class="t" style="left:5px;top:6.60px;font-size:24px;letter-spacing:0.3px;color:#111">1</div></div><div class="a" style="left:600px;top:719px;width:168px;height:36px;overflow:hidden"><div class="t" style="left:5px;top:6.60px;font-size:24px;letter-spacing:0.3px;color:#111">Emergency</div></div><div class="a" style="left:770px;top:719px;width:306px;height:36px;overflow:hidden"><div class="t" style="left:5px;top:6.60px;font-size:24px;letter-spacing:0.3px;color:#111">Home or Self Care</div></div><div class="a" style="left:1078px;top:719px;width:242px;height:36px;overflow:hidden"><div class="t" style="left:5px;top:6.60px;font-size:24px;letter-spacing:0.3px;color:#111">Medicaid</div></div><div class="a" style="left:1322px;top:719px;width:152px;height:36px;overflow:hidden"><div class="t" style="left:5px;top:6.60px;font-size:24px;letter-spacing:0.3px;color:#111">CIR008</div></div><div class="a" style="left:1476px;top:719px;width:438px;height:36px;overflow:hidden"><div class="t" style="left:5px;top:7.40px;font-size:23px;letter-spacing:-0.2px;color:#111">HYPERTENSION WITH COMPLICATIONS</div></div><div class="a" style="left:0;top:755px;width:1896px;height:2px;background:#e1e1e1"></div><div class="t" style="left:0.7px;top:768.00px;width:136px;text-align:center;font-size:20px;letter-spacing:1.4px;color:#1f1f1f">14</div><div class="a" style="left:138px;top:757px;width:152px;height:37px;overflow:hidden"><div class="t" style="left:5px;top:7.10px;font-size:24px;letter-spacing:0.9px;color:#111">30 to 49</div></div><div class="a" style="left:292px;top:757px;width:152px;height:37px;overflow:hidden"><div class="t" style="left:5px;top:7.10px;font-size:24px;letter-spacing:0.3px;color:#111">F</div></div><div class="a" style="left:446px;top:757px;width:152px;height:37px;overflow:hidden"><div class="t" style="left:5px;top:7.10px;font-size:24px;letter-spacing:0.3px;color:#111">4</div></div><div class="a" style="left:600px;top:757px;width:168px;height:37px;overflow:hidden"><div class="t" style="left:5px;top:7.10px;font-size:24px;letter-spacing:0.3px;color:#111">Emergency</div></div><div class="a" style="left:770px;top:757px;width:306px;height:37px;overflow:hidden"><div class="t" style="left:5px;top:7.10px;font-size:24px;letter-spacing:0.3px;color:#111">Left Against Medical Advice</div></div><div class="a" style="left:1078px;top:757px;width:242px;height:37px;overflow:hidden"><div class="t" style="left:5px;top:7.10px;font-size:24px;letter-spacing:0.3px;color:#111">Medicaid</div></div><div class="a" style="left:1322px;top:757px;width:152px;height:37px;overflow:hidden"><div class="t" style="left:5px;top:7.10px;font-size:24px;letter-spacing:0.3px;color:#111">MBD018</div></div><div class="a" style="left:1476px;top:757px;width:438px;height:37px;overflow:hidden"><div class="t" style="left:5px;top:7.90px;font-size:23px;letter-spacing:-0.2px;color:#111">OPIOID<span style="margin:0 1.5px">-</span>RELATED DISORDERS</div></div><div class="a" style="left:0;top:794px;width:1896px;height:2px;background:#e1e1e1"></div><div class="t" style="left:0.7px;top:806.50px;width:136px;text-align:center;font-size:20px;letter-spacing:1.4px;color:#1f1f1f">15</div><div class="a" style="left:138px;top:796px;width:152px;height:36px;overflow:hidden"><div class="t" style="left:5px;top:6.60px;font-size:24px;letter-spacing:0.9px;color:#111">30 to 49</div></div><div class="a" style="left:292px;top:796px;width:152px;height:36px;overflow:hidden"><div class="t" style="left:5px;top:6.60px;font-size:24px;letter-spacing:0.3px;color:#111">M</div></div><div class="a" style="left:446px;top:796px;width:152px;height:36px;overflow:hidden"><div class="t" style="left:5px;top:6.60px;font-size:24px;letter-spacing:0.3px;color:#111">2</div></div><div class="a" style="left:600px;top:796px;width:168px;height:36px;overflow:hidden"><div class="t" style="left:5px;top:6.60px;font-size:24px;letter-spacing:0.3px;color:#111">Emergency</div></div><div class="a" style="left:770px;top:796px;width:306px;height:36px;overflow:hidden"><div class="t" style="left:5px;top:6.60px;font-size:24px;letter-spacing:0.3px;color:#111">Home or Self Care</div></div><div class="a" style="left:1078px;top:796px;width:242px;height:36px;overflow:hidden"><div class="t" style="left:5px;top:6.60px;font-size:24px;letter-spacing:0.3px;color:#111">Medicaid</div></div><div class="a" style="left:1322px;top:796px;width:152px;height:36px;overflow:hidden"><div class="t" style="left:5px;top:6.60px;font-size:24px;letter-spacing:0.3px;color:#111">RSP003</div></div><div class="a" style="left:1476px;top:796px;width:438px;height:36px;overflow:hidden"><div class="t" style="left:5px;top:7.40px;font-size:23px;letter-spacing:-0.2px;color:#111">INFLUENZA</div></div><div class="a" style="left:0;top:832px;width:1896px;height:2px;background:#e1e1e1"></div><div class="t" style="left:0.7px;top:845.00px;width:136px;text-align:center;font-size:20px;letter-spacing:1.4px;color:#1f1f1f">16</div><div class="a" style="left:138px;top:834px;width:152px;height:37px;overflow:hidden"><div class="t" style="left:5px;top:7.10px;font-size:24px;letter-spacing:0.9px;color:#111">30 to 49</div></div><div class="a" style="left:292px;top:834px;width:152px;height:37px;overflow:hidden"><div class="t" style="left:5px;top:7.10px;font-size:24px;letter-spacing:0.3px;color:#111">F</div></div><div class="a" style="left:446px;top:834px;width:152px;height:37px;overflow:hidden"><div class="t" style="left:5px;top:7.10px;font-size:24px;letter-spacing:0.3px;color:#111">1</div></div><div class="a" style="left:600px;top:834px;width:168px;height:37px;overflow:hidden"><div class="t" style="left:5px;top:7.10px;font-size:24px;letter-spacing:0.3px;color:#111">Emergency</div></div><div class="a" style="left:770px;top:834px;width:306px;height:37px;overflow:hidden"><div class="t" style="left:5px;top:7.10px;font-size:24px;letter-spacing:0.3px;color:#111">Home or Self Care</div></div><div class="a" style="left:1078px;top:834px;width:242px;height:37px;overflow:hidden"><div class="t" style="left:5px;top:7.10px;font-size:24px;letter-spacing:0.3px;color:#111">Private Health Insurance</div></div><div class="a" style="left:1322px;top:834px;width:152px;height:37px;overflow:hidden"><div class="t" style="left:5px;top:7.10px;font-size:24px;letter-spacing:0.3px;color:#111">SYM012</div></div><div class="a" style="left:1476px;top:834px;width:438px;height:37px;overflow:hidden"><div class="t" style="left:5px;top:7.90px;font-size:23px;letter-spacing:-0.2px;color:#111">CIRCULATORY SIGNS AND SYMPTOMS</div></div><div class="a" style="left:0;top:871px;width:1896px;height:2px;background:#e1e1e1"></div><div class="t" style="left:0.7px;top:883.50px;width:136px;text-align:center;font-size:20px;letter-spacing:1.4px;color:#1f1f1f">17</div><div class="a" style="left:138px;top:873px;width:152px;height:36px;overflow:hidden"><div class="t" style="left:5px;top:6.60px;font-size:24px;letter-spacing:0.1px;color:#111">70 or Older</div></div><div class="a" style="left:292px;top:873px;width:152px;height:36px;overflow:hidden"><div class="t" style="left:5px;top:6.60px;font-size:24px;letter-spacing:0.3px;color:#111">F</div></div><div class="a" style="left:446px;top:873px;width:152px;height:36px;overflow:hidden"><div class="t" style="left:5px;top:6.60px;font-size:24px;letter-spacing:0.3px;color:#111">9</div></div><div class="a" style="left:600px;top:873px;width:168px;height:36px;overflow:hidden"><div class="t" style="left:5px;top:6.60px;font-size:24px;letter-spacing:0.3px;color:#111">Emergency</div></div><div class="a" style="left:770px;top:873px;width:306px;height:36px;overflow:hidden"><div class="t" style="left:5px;top:6.60px;font-size:24px;letter-spacing:0.3px;color:#111">Home or Self Care</div></div><div class="a" style="left:1078px;top:873px;width:242px;height:36px;overflow:hidden"><div class="t" style="left:5px;top:6.60px;font-size:24px;letter-spacing:0.3px;color:#111">Medicare</div></div><div class="a" style="left:1322px;top:873px;width:152px;height:36px;overflow:hidden"><div class="t" style="left:5px;top:6.60px;font-size:24px;letter-spacing:0.3px;color:#111">INF008</div></div><div class="a" style="left:1476px;top:873px;width:438px;height:36px;overflow:hidden"><div class="t" style="left:5px;top:7.40px;font-size:23px;letter-spacing:-0.2px;color:#111">VIRAL INFECTION</div></div><div class="a" style="left:0;top:909px;width:1896px;height:2px;background:#e1e1e1"></div><div class="t" style="left:0.7px;top:922.00px;width:136px;text-align:center;font-size:20px;letter-spacing:1.4px;color:#1f1f1f">18</div><div class="a" style="left:138px;top:911px;width:152px;height:37px;overflow:hidden"><div class="t" style="left:5px;top:7.10px;font-size:24px;letter-spacing:0.9px;color:#111">30 to 49</div></div><div class="a" style="left:292px;top:911px;width:152px;height:37px;overflow:hidden"><div class="t" style="left:5px;top:7.10px;font-size:24px;letter-spacing:0.3px;color:#111">F</div></div><div class="a" style="left:446px;top:911px;width:152px;height:37px;overflow:hidden"><div class="t" style="left:5px;top:7.10px;font-size:24px;letter-spacing:0.3px;color:#111">3</div></div><div class="a" style="left:600px;top:911px;width:168px;height:37px;overflow:hidden"><div class="t" style="left:5px;top:7.10px;font-size:24px;letter-spacing:0.3px;color:#111">Elective</div></div><div class="a" style="left:770px;top:911px;width:306px;height:37px;overflow:hidden"><div class="t" style="left:5px;top:7.10px;font-size:24px;letter-spacing:0.3px;color:#111">Home or Self Care</div></div><div class="a" style="left:1078px;top:911px;width:242px;height:37px;overflow:hidden"><div class="t" style="left:5px;top:7.10px;font-size:24px;letter-spacing:0.3px;color:#111">Private Health Insurance</div></div><div class="a" style="left:1322px;top:911px;width:152px;height:37px;overflow:hidden"><div class="t" style="left:5px;top:7.10px;font-size:24px;letter-spacing:0.3px;color:#111">PRG029</div></div><div class="a" style="left:1476px;top:911px;width:438px;height:37px;overflow:hidden"><div class="t" style="left:5px;top:7.90px;font-size:23px;letter-spacing:-0.2px;color:#111">UNCOMPLICATED PREGNANCY, DELIVERY</div></div><div class="a" style="left:0;top:948px;width:1896px;height:2px;background:#e1e1e1"></div><div class="t" style="left:0.7px;top:960.50px;width:136px;text-align:center;font-size:20px;letter-spacing:1.4px;color:#1f1f1f">19</div><div class="a" style="left:138px;top:950px;width:152px;height:36px;overflow:hidden"><div class="t" style="left:5px;top:6.60px;font-size:24px;letter-spacing:0.9px;color:#111">30 to 49</div></div><div class="a" style="left:292px;top:950px;width:152px;height:36px;overflow:hidden"><div class="t" style="left:5px;top:6.60px;font-size:24px;letter-spacing:0.3px;color:#111">F</div></div><div class="a" style="left:446px;top:950px;width:152px;height:36px;overflow:hidden"><div class="t" style="left:5px;top:6.60px;font-size:24px;letter-spacing:0.3px;color:#111">3</div></div><div class="a" style="left:600px;top:950px;width:168px;height:36px;overflow:hidden"><div class="t" style="left:5px;top:6.60px;font-size:24px;letter-spacing:0.3px;color:#111">Urgent</div></div><div class="a" style="left:770px;top:950px;width:306px;height:36px;overflow:hidden"><div class="t" style="left:5px;top:6.60px;font-size:24px;letter-spacing:0.3px;color:#111">Home or Self Care</div></div><div class="a" style="left:1078px;top:950px;width:242px;height:36px;overflow:hidden"><div class="t" style="left:5px;top:6.60px;font-size:24px;letter-spacing:0.3px;color:#111">Private Health Insurance</div></div><div class="a" style="left:1322px;top:950px;width:152px;height:36px;overflow:hidden"><div class="t" style="left:5px;top:6.60px;font-size:24px;letter-spacing:0.3px;color:#111">PRG010</div></div><div class="a" style="left:1476px;top:950px;width:438px;height:36px;overflow:hidden"><div class="t" style="left:5px;top:7.40px;font-size:23px;letter-spacing:-0.2px;color:#111">HEMORRHAGE AFTER FIRST TRIMESTER</div></div><div class="a" style="left:0;top:986px;width:1896px;height:2px;background:#e1e1e1"></div><div class="a" style="left:290px;top:193px;width:2px;height:37px;background:#cfcfcf"></div><div class="a" style="left:290px;top:232px;width:2px;height:60px;background:#e1e1e1"></div><div class="a" style="left:290px;top:297px;width:2px;height:688px;background:#e1e1e1"></div><div class="a" style="left:444px;top:193px;width:2px;height:37px;background:#cfcfcf"></div><div class="a" style="left:444px;top:232px;width:2px;height:60px;background:#e1e1e1"></div><div class="a" style="left:444px;top:297px;width:2px;height:688px;background:#e1e1e1"></div><div class="a" style="left:598px;top:193px;width:2px;height:37px;background:#cfcfcf"></div><div class="a" style="left:598px;top:232px;width:2px;height:60px;background:#e1e1e1"></div><div class="a" style="left:598px;top:297px;width:2px;height:688px;background:#e1e1e1"></div><div class="a" style="left:768px;top:193px;width:2px;height:37px;background:#cfcfcf"></div><div class="a" style="left:768px;top:232px;width:2px;height:60px;background:#e1e1e1"></div><div class="a" style="left:768px;top:297px;width:2px;height:688px;background:#e1e1e1"></div><div class="a" style="left:1076px;top:193px;width:2px;height:37px;background:#cfcfcf"></div><div class="a" style="left:1076px;top:232px;width:2px;height:60px;background:#e1e1e1"></div><div class="a" style="left:1076px;top:297px;width:2px;height:688px;background:#e1e1e1"></div><div class="a" style="left:1320px;top:193px;width:2px;height:37px;background:#cfcfcf"></div><div class="a" style="left:1320px;top:232px;width:2px;height:60px;background:#e1e1e1"></div><div class="a" style="left:1320px;top:297px;width:2px;height:688px;background:#e1e1e1"></div><div class="a" style="left:1474px;top:193px;width:2px;height:37px;background:#cfcfcf"></div><div class="a" style="left:1474px;top:232px;width:2px;height:60px;background:#e1e1e1"></div><div class="a" style="left:1474px;top:297px;width:2px;height:688px;background:#e1e1e1"></div><div class="a" style="left:1914px;top:193px;width:2px;height:37px;background:#cfcfcf"></div><div class="a" style="left:1914px;top:232px;width:2px;height:60px;background:#e1e1e1"></div><div class="a" style="left:1914px;top:297px;width:2px;height:688px;background:#e1e1e1"></div><div class="a" style="left:136px;top:193px;width:2px;height:37px;background:#cfcfcf"></div><div class="a" style="left:136px;top:232px;width:2px;height:753px;background:#d6d6d6"></div><div class="a" style="left:1077px;top:293px;width:245px;height:41px;background:#4a8f9d"></div><div class="a" style="left:1080px;top:296.5px;width:238.5px;height:34px;background:#eaf5f7"></div><div class="a" style="left:1078px;top:297px;width:240px;height:33px;overflow:hidden"><div class="t" style="left:5.5px;top:5px;font-size:24px;letter-spacing:0.3px;color:#111">Medicare</div></div><div class="a" style="left:1311px;top:323px;width:15px;height:15px;background:#fff"></div><div class="a" style="left:1313px;top:325px;width:12px;height:12px;background:#4a8f9d"></div><div class="a" style="left:1896px;top:193px;width:20px;height:816px;background:#fafafa"></div><div class="a" style="left:1896px;top:193px;width:2px;height:816px;background:#dcdcdc"></div><div class="a" style="left:1898px;top:215px;width:18px;height:2px;background:#e4e4e4"></div><svg style="left:1902px;top:197px" width="14" height="13" viewBox="0 0 14 13"><path d="M7 1.5 L13 11.8 H1z" fill="#c2c2c2"/></svg><div class="a" style="left:1901px;top:221px;width:17px;height:70px;border-radius:8px;background:#c1c1c1"></div><div class="a" style="left:1898px;top:959px;width:18px;height:2px;background:#e4e4e4"></div><svg style="left:1902px;top:967px" width="14" height="13" viewBox="0 0 14 13"><path d="M1 1.2 H13 L7 11.5z" fill="#c2c2c2"/></svg><div class="a" style="left:0;top:985px;width:1896px;height:24px;background:#fafafa"></div><div class="a" style="left:0;top:984px;width:1916px;height:2px;background:#dcdcdc"></div><div class="a" style="left:0;top:1008px;width:1916px;height:1.5px;background:#d6d6d6"></div><div class="a" style="left:21px;top:985px;width:2px;height:24px;background:#e4e4e4"></div><svg style="left:2px;top:990px" width="14" height="14" viewBox="0 0 14 14"><path d="M12 1.2 V12.8 L2 7z" fill="#c2c2c2"/></svg><div class="a" style="left:1872px;top:985px;width:2px;height:24px;background:#e4e4e4"></div><svg style="left:1879px;top:990px" width="14" height="14" viewBox="0 0 14 14"><path d="M1.5 1.2 V12.8 L11.5 7z" fill="#c2c2c2"/></svg><div class="a" style="left:493px;top:989px;width:706px;height:16px;border-radius:8px;background:#c1c1c1"></div><div class="a" style="left:0;top:1009px;width:1916px;height:65px;background:#fafafa"></div><svg style="left:28px;top:1033px" width="24" height="24" viewBox="0 0 24 24"><path d="M12 2 v20 M2 12 h20" stroke="#1f1f1f" stroke-width="2.6" fill="none"/></svg><svg style="left:102px;top:1034px" width="30" height="22" viewBox="0 0 30 22"><path d="M2 3.3 h26 M2 10.5 h26 M2 17.7 h26" stroke="#1f1f1f" stroke-width="2.8" fill="none"/></svg><div class="a" style="left:156px;top:1017px;width:181px;height:53px;border-radius:5px;background:#e2e2e2"></div><div class="t" style="left:183px;top:1032.5px;font-size:24px;letter-spacing:0.3px;color:#1f1f1f">Daily Billing</div></div></body></html>
